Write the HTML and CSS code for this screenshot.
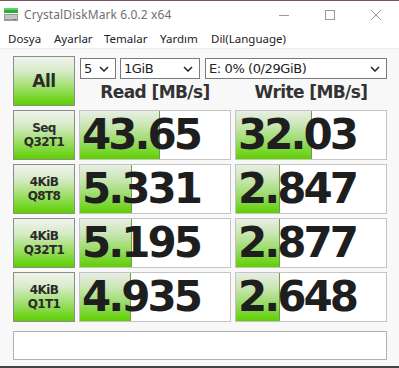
FILE: index.html
```html
<!DOCTYPE html>
<html lang="tr">
<head>
  <meta charset="UTF-8">
  <meta name="viewport" content="width=device-width, initial-scale=1.0">
  <title>CrystalDiskMark 6.0.2 x64</title>
  <link rel="stylesheet" href="styles.css">
</head>
<body>
  <div class="window">
    <!-- Title bar -->
    <div class="titlebar">
      <svg class="app-icon" width="16" height="16" viewBox="0 0 16 16">
        <rect x="1" y="2" width="14" height="5" fill="#2fae3a"/>
        <rect x="1" y="2" width="14" height="2" fill="#5fd36a"/>
        <rect x="1" y="8" width="14" height="7" fill="#9a9a9a"/>
        <rect x="2" y="9" width="12" height="4" fill="#c4c4c4"/>
        <rect x="11" y="13" width="2" height="1" fill="#6a6a6a"/>
      </svg>
      <span class="title">CrystalDiskMark 6.0.2 x64</span>
      <div class="controls">
        <svg width="46" height="20" viewBox="0 0 46 20"><line x1="18" y1="10.5" x2="28" y2="10.5" stroke="#999" stroke-width="1"/></svg>
        <svg width="46" height="20" viewBox="0 0 46 20"><rect x="18.5" y="5.5" width="9" height="9" fill="none" stroke="#999" stroke-width="1"/></svg>
        <svg width="46" height="20" viewBox="0 0 46 20"><path d="M18 5 L28 15 M28 5 L18 15" stroke="#999" stroke-width="1"/></svg>
      </div>
    </div>

    <!-- Menu -->
    <div class="menubar">
      <span class="menu-item m-dosya">Dosya</span>
      <span class="menu-item m-ayar">Ayarlar</span>
      <span class="menu-item m-tema">Temalar</span>
      <span class="menu-item m-yardim">Yardım</span>
      <span class="menu-item">Dil(Language)</span>
    </div>

    <main class="content">
      <div class="board">
        <div class="btn all">All</div>

        <div class="head">
          <div class="selects">
            <div class="select s-count"><span>5</span><svg class="chev" width="10" height="6" viewBox="0 0 10 6"><path d="M1 1 L5 5 L9 1" fill="none" stroke="#222" stroke-width="1.5"/></svg></div>
            <div class="select s-size"><span>1GiB</span><svg class="chev" width="10" height="6" viewBox="0 0 10 6"><path d="M1 1 L5 5 L9 1" fill="none" stroke="#222" stroke-width="1.5"/></svg></div>
            <div class="select s-drive"><span>E: 0% (0/29GiB)</span><svg class="chev" width="10" height="6" viewBox="0 0 10 6"><path d="M1 1 L5 5 L9 1" fill="none" stroke="#222" stroke-width="1.5"/></svg></div>
          </div>
          <div class="col-titles">
            <div class="col-title">Read [MB/s]</div>
            <div class="col-title">Write [MB/s]</div>
          </div>
        </div>

        <!-- Seq Q32T1 -->
        <div class="btn label">Seq<br>Q32T1</div>
        <div class="cell"><div class="bar" style="width: 79px"></div><span class="value">43.65</span></div>
        <div class="cell"><div class="bar" style="width: 75px"></div><span class="value">32.03</span></div>

        <!-- 4KiB Q8T8 -->
        <div class="btn label">4KiB<br>Q8T8</div>
        <div class="cell"><div class="bar" style="width: 51px"></div><span class="value">5.331</span></div>
        <div class="cell"><div class="bar" style="width: 43px"></div><span class="value">2.847</span></div>

        <!-- 4KiB Q32T1 -->
        <div class="btn label">4KiB<br>Q32T1</div>
        <div class="cell"><div class="bar" style="width: 51px"></div><span class="value">5.195</span></div>
        <div class="cell"><div class="bar" style="width: 43px"></div><span class="value">2.877</span></div>

        <!-- 4KiB Q1T1 -->
        <div class="btn label">4KiB<br>Q1T1</div>
        <div class="cell"><div class="bar" style="width: 50px"></div><span class="value">4.935</span></div>
        <div class="cell"><div class="bar" style="width: 43px"></div><span class="value">2.648</span></div>
      </div>

      <div class="comment"></div>
    </main>
    <div class="taskbar-edge"></div>
  </div>
</body>
</html>
```

FILE: styles.css
```css
/* General */
body {
  margin: 0;
  padding: 0;
  background: #f8f8f8;
  font-family: "Noto Sans", "Open Sans", sans-serif;
  color: #222;
}

.window {
  width: 399px;
  height: 368px;
  display: flex;
  flex-direction: column;
  border-top: 1px solid #7d5266;
  box-sizing: border-box;
  overflow: hidden;
}

/* Title bar */
.titlebar {
  height: 27px;
  background: #fff;
  display: flex;
  align-items: center;
  padding-left: 3px;
}

.app-icon {
  margin-top: -2px;
}

.title {
  margin-left: 5px;
  font-size: 12px;
  color: #707070;
  letter-spacing: 0.1px;
}

.controls {
  margin-left: auto;
  display: flex;
}

/* Menu */
.menubar {
  height: 20px;
  background: #fff;
  display: flex;
  align-items: center;
  padding-left: 8px;
  font-size: 11.5px;
  color: #222;
  border-bottom: 1px solid #ececec;
}

.m-dosya { width: 46px; }
.m-ayar { width: 50px; }
.m-tema { width: 56px; }
.m-yardim { width: 51px; }

/* Main area */
.content {
  flex: 1;
  padding: 7px 13px 0;
  background: #f8f8f8;
}

.board {
  display: grid;
  grid-template-columns: 62px 152px 152px;
  grid-template-rows: repeat(5, 50px);
  column-gap: 4px;
  row-gap: 4px;
}

.btn {
  box-sizing: border-box;
  border: 1px solid #8c8c8c;
  background: linear-gradient(to bottom, #f0f3ee 0%, #d6ebc6 30%, #93dc58 70%, #5ccf00 100%);
  display: flex;
  align-items: center;
  justify-content: center;
  text-align: center;
  font-family: "DejaVu Sans", sans-serif;
  font-weight: bold;
  color: #2b2b2b;
}

.all {
  font-size: 17px;
  letter-spacing: -0.5px;
}

.label {
  font-size: 12px;
  line-height: 14px;
  letter-spacing: -0.6px;
}

/* Header with selects */
.head {
  grid-column: 2 / 4;
  display: flex;
  flex-direction: column;
}

.selects {
  display: flex;
  margin-top: 2px;
  margin-left: 1px;
  gap: 4px;
}

.select {
  box-sizing: border-box;
  height: 21px;
  border: 1px solid #7a7a7a;
  background: #fff;
  display: flex;
  align-items: center;
  justify-content: space-between;
  padding: 0 6px 0 3px;
  font-family: "DejaVu Sans", sans-serif;
  font-size: 13px;
  letter-spacing: -0.4px;
  color: #222;
}

.s-count { width: 36px; }
.s-size { width: 80px; margin-right: 1px; }
.s-drive { width: 182px; }

.col-titles {
  display: flex;
  gap: 4px;
  flex: 1;
}

.col-title {
  width: 152px;
  text-align: center;
  font-family: "DejaVu Sans", sans-serif;
  font-weight: bold;
  font-size: 17px;
  line-height: 24px;
  letter-spacing: -0.6px;
  color: #333;
  margin-top: 1px;
}

/* Result cells */
.cell {
  position: relative;
  box-sizing: border-box;
  border: 1px solid #c4c4c4;
  background: #fff;
  display: flex;
  align-items: center;
  overflow: hidden;
}

.bar {
  position: absolute;
  left: 0;
  top: 0;
  bottom: 0;
  border-right: 1px solid #6e9a52;
  background: linear-gradient(to bottom, #e8eee4 0%, #cae6b4 30%, #90d958 70%, #5fd000 100%);
}

.value {
  position: relative;
  padding-left: 2px;
  font-family: "DejaVu Sans", sans-serif;
  font-weight: bold;
  font-size: 42px;
  line-height: 48px;
  letter-spacing: -3px;
  color: #1e1e1e;
}

/* Comment box */
.comment {
  margin-top: 9px;
  width: 374px;
  height: 29px;
  box-sizing: border-box;
  border: 1px solid #b0b0b0;
  background: #fff;
}

.taskbar-edge {
  height: 2px;
  background: #4d4342;
}
```
